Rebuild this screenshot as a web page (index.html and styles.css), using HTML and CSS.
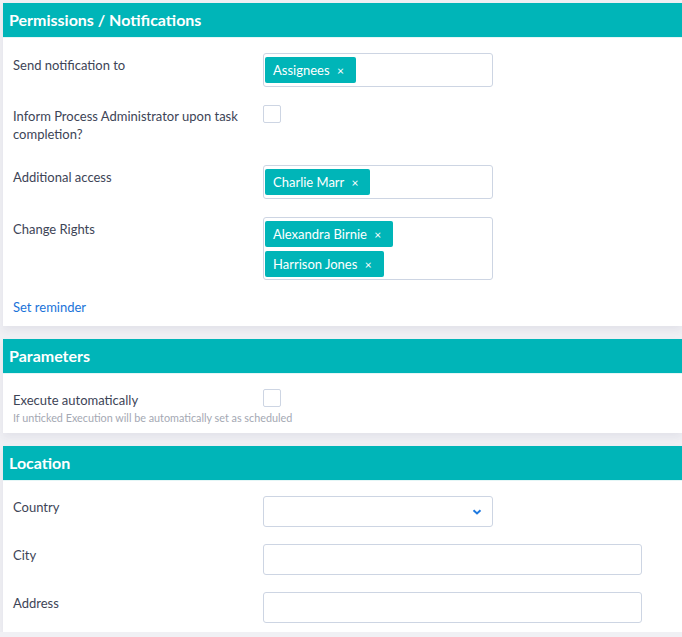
FILE: index.html
```html
<!DOCTYPE html>
<html>
<head>
<meta charset="utf-8">
<link rel="stylesheet" href="styles.css">
</head>
<body>
<div class="page">
  <section class="card">
    <h2 class="card-head">Permissions / Notifications</h2>
    <div class="card-body perms">
      <div class="row">
        <div class="label">Send notification to</div>
        <div class="control">
          <div class="tagbox"><span class="chip">Assignees <span class="x">×</span></span></div>
        </div>
      </div>
      <div class="row check-row">
        <div class="label">Inform Process Administrator upon task completion?</div>
        <div class="control"><span class="checkbox"></span></div>
      </div>
      <div class="row">
        <div class="label">Additional access</div>
        <div class="control">
          <div class="tagbox"><span class="chip">Charlie Marr <span class="x">×</span></span></div>
        </div>
      </div>
      <div class="row">
        <div class="label">Change Rights</div>
        <div class="control">
          <div class="tagbox multi">
            <span class="chip">Alexandra Birnie <span class="x">×</span></span>
            <span class="chip">Harrison Jones <span class="x">×</span></span>
          </div>
        </div>
      </div>
      <a class="link" href="#">Set reminder</a>
    </div>
  </section>

  <section class="card">
    <h2 class="card-head">Parameters</h2>
    <div class="card-body params">
      <div class="row check-row">
        <div class="label">Execute automatically</div>
        <div class="control"><span class="checkbox"></span></div>
      </div>
      <div class="help">If unticked Execution will be automatically set as scheduled</div>
    </div>
  </section>

  <section class="card">
    <h2 class="card-head">Location</h2>
    <div class="card-body location">
      <div class="row">
        <div class="label">Country</div>
        <div class="control">
          <div class="select">
            <svg class="chev" width="10" height="6" viewBox="0 0 10 6"><path d="M1.5 1.2 L5 4.5 L8.5 1.2" fill="none" stroke="#1f7ae0" stroke-width="2"/></svg>
          </div>
        </div>
      </div>
      <div class="row">
        <div class="label">City</div>
        <div class="control"><div class="input wide"></div></div>
      </div>
      <div class="row">
        <div class="label">Address</div>
        <div class="control"><div class="input wide"></div></div>
      </div>
    </div>
  </section>
</div>
</body>
</html>
```

FILE: styles.css
```css
* { box-sizing: border-box; }
html, body { margin: 0; padding: 0; }
body {
  background: #f0f0f4;
  font-family: "Lato", "Open Sans", sans-serif;
  color: #3b4252;
  font-size: 13px;
}
.page {
  padding: 3px 0 0 3px;
  display: flex;
  flex-direction: column;
  gap: 13px;
}
.card {
  background: #fff;
  box-shadow: 0 4px 8px rgba(60, 60, 100, 0.07);
}
.card-head {
  margin: 0;
  background: #00b5b8;
  color: #fff;
  font-size: 16px;
  font-weight: 700;
  height: 35px;
  line-height: 34px;
  padding: 0 6px;
  border-bottom: 1px solid #e4f6f6;
}
.card-body {
  padding: 15px 10px 9px 10px;
  display: flex;
  flex-direction: column;
  gap: 18px;
}
.perms { padding-bottom: 10px; }
.row {
  display: flex;
  align-items: flex-start;
}
.label {
  width: 250px;
  padding-top: 3px;
  line-height: 18px;
  color: #3d4456;
}
.check-row .label { padding-top: 2px; padding-bottom: 4px; }
.control { flex: 1; }
.tagbox {
  width: 230px;
  min-height: 34px;
  border: 1px solid #cdd5e3;
  border-radius: 3px;
  padding: 3px 1px;
  display: flex;
  flex-direction: column;
  align-items: flex-start;
  gap: 4px;
}
.tagbox.multi { padding-bottom: 2px; }
.chip {
  background: #00b5b8;
  color: #fff;
  height: 26px;
  line-height: 26px;
  padding: 0 12px 0 8px;
  border-radius: 2px;
  font-size: 13px;
  white-space: nowrap;
}
.chip .x { font-size: 12px; margin-left: 4px; }
.checkbox {
  display: block;
  width: 18px;
  height: 18px;
  border: 1px solid #cdd5e3;
  border-radius: 2px;
}
.link {
  color: #1a73d9;
  text-decoration: none;
  line-height: 18px;
}
.params { gap: 0; padding-bottom: 8px; }
.params .check-row .label { padding-bottom: 0; }
.help {
  margin-top: 2px;
  font-size: 10.8px;
  color: #a4a8b3;
  line-height: 14px;
}
.location { gap: 17px; }
.location .label { padding-top: 2px; }
.select {
  width: 230px;
  height: 31px;
  border: 1px solid #cdd5e3;
  border-radius: 3px;
  display: flex;
  align-items: center;
  justify-content: flex-end;
  padding-right: 10px;
}
.input {
  height: 31px;
  border: 1px solid #cdd5e3;
  border-radius: 3px;
}
.input.wide { width: 379px; }
```
